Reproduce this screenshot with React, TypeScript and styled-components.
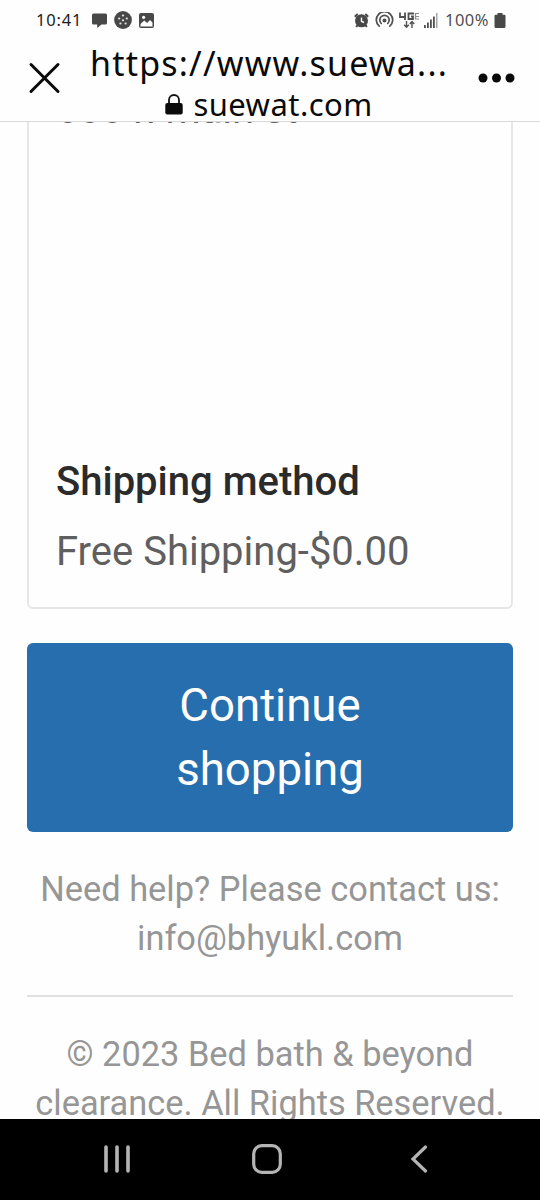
import React from "react";
import styled, { createGlobalStyle } from "styled-components";

const GlobalStyle = createGlobalStyle`
  * { box-sizing: border-box; }
  body { margin: 0; background: #fefefe; font-family: Roboto, sans-serif; }
`;

const Screen = styled.div`
  width: 540px;
  height: 1200px;
  display: flex;
  flex-direction: column;
  overflow: hidden;
  background: #fefefe;
`;

const StatusBar = styled.div`
  height: 40px;
  flex: none;
  display: flex;
  align-items: center;
  justify-content: space-between;
  padding: 0 34px 0 36px;
  font-family: "Noto Sans", sans-serif;
  color: #444;
`;

const StatusGroup = styled.div`
  display: flex;
  align-items: center;
`;

const StatusText = styled.span<{ $dark?: boolean; $left?: number }>`
  margin-left: ${(p) => p.$left ?? 0}px;
  font-size: 16.5px;
  line-height: 20px;
  letter-spacing: ${(p) => (p.$dark ? 0.8 : 0.5)}px;
  color: ${(p) => (p.$dark ? "#1c1c1c" : "#505050")};
`;

const Glyph = styled.svg<{ $left?: number }>`
  display: block;
  flex: none;
  margin-left: ${(p) => p.$left ?? 0}px;
`;

const BrowserBar = styled.header`
  height: 82px;
  flex: none;
  display: flex;
  align-items: flex-start;
  padding: 0 25px 0 28px;
  border-bottom: 1px solid #d9d9d9;
  color: #0a0a0a;
  font-family: "Noto Sans", sans-serif;
`;

const IconButton = styled.button`
  border: 0;
  padding: 0;
  margin-top: 21px;
  background: none;
  flex: none;
`;

const Address = styled.div`
  flex: 1;
  display: flex;
  flex-direction: column;
  align-items: center;
`;

const PageTitle = styled.div`
  height: 47px;
  line-height: 46px;
  font-size: 34px;
  letter-spacing: 1.2px;
  white-space: nowrap;
`;

const Domain = styled.div`
  height: 35px;
  display: flex;
  align-items: center;
  gap: 10px;
  font-size: 31px;
  line-height: 35px;
  letter-spacing: 0.45px;
`;

const Page = styled.main`
  flex: 1;
  min-height: 0;
  overflow: hidden;
  padding: 0 27px;
`;

const Card = styled.section`
  height: 547px;
  margin-top: -60px;
  padding: 22px 27px 0;
  border: 2px solid #e6e6e6;
  border-radius: 6px;
  font-size: 40px;
  line-height: 48px;
  color: #5f5f5f;
`;

const AddressLine = styled.p`
  margin: 0 0 324px;
`;

const CardHeading = styled.h3`
  margin: 0 0 22px;
  font-size: 40px;
  font-weight: 500;
  line-height: 48px;
  color: #2b2b2b;
`;

const ShippingValue = styled.p`
  margin: 0;
`;

const ContinueButton = styled.button`
  display: block;
  width: 100%;
  height: 189px;
  margin-top: 34px;
  padding: 0 120px;
  border: 0;
  border-radius: 6px;
  background: #276eae;
  color: #fff;
  font-family: Roboto, sans-serif;
  font-size: 45.6px;
  line-height: 64px;
`;

const FooterText = styled.p`
  margin: 33px -20px 0;
  text-align: center;
  font-size: 34.4px;
  line-height: 48.5px;
  color: #969696;
`;

const Divider = styled.hr`
  height: 2px;
  margin: 33px 0 0;
  border: 0;
  background: #e0e0e0;
`;

const NavBar = styled.nav`
  height: 81px;
  flex: none;
  display: flex;
  align-items: center;
  padding: 0 0 2px 103px;
  background: #000;
`;

export default function App() {
  return (
    <>
      <GlobalStyle />
      <Screen>
        <StatusBar>
          <StatusGroup>
            <StatusText $dark>10:41</StatusText>
            <Glyph $left={10} width="15" height="15" viewBox="0 0 15 15" fill="#484848">
              <path d="M1.5.5h12Q15 .5 15 2v8Q15 11.500 13.500 11.500H9.500L5.200 15V11.500H1.500Q0 11.500 0 10V2Q0 .5 1.500.5z" />
            </Glyph>
            <Glyph $left={7} width="18" height="18" viewBox="0 0 18 18">
              <circle cx="9" cy="9" r="8.900" fill="#484848" />
              <g fill="#e6e6e6">
                <circle cx="9" cy="4.500" r="1.100" /><circle cx="5.200" cy="7.500" r="1.100" />
                <circle cx="12.800" cy="7.500" r="1.100" /><circle cx="9" cy="9.300" r="1.100" />
                <circle cx="6.400" cy="12.500" r="1.100" /><circle cx="11.600" cy="12.500" r="1.100" />
              </g>
            </Glyph>
            <Glyph $left={7} width="15" height="15" viewBox="0 0 15 15">
              <rect width="15" height="15" rx="2" fill="#484848" />
              <path d="M1.500 11L5.200 7.500l3 2.500L11 7l2.500 2.500V13.500h-12z" fill="#fefefe" />
              <circle cx="4.600" cy="4.300" r="1.600" fill="#fefefe" />
            </Glyph>
          </StatusGroup>
          <StatusGroup>
            <Glyph width="15" height="15" viewBox="0 0 15 15">
              <path d="M.8 3.700L3.700 1M14.200 3.700L11.300 1M3.500 12l-1.300 2M11.500 12l1.300 2" stroke="#484848" strokeWidth="2" />
              <circle cx="7.500" cy="7.800" r="6.500" fill="#484848" />
              <path d="M7.500 4.500V8.300L10 9.500" fill="none" stroke="#fefefe" strokeWidth="1.400" />
            </Glyph>
            <Glyph $left={6} width="19" height="16" viewBox="0 0 19 16" fill="none" stroke="#505050" strokeWidth="1.700" strokeLinecap="round">
              <path d="M4.200 14.200A8.200 8.200 0 1 1 14.800 14.200" />
              <path d="M6.300 11.500A4.700 4.700 0 1 1 12.700 11.500" />
              <circle cx="9.500" cy="8.500" r="1.200" fill="#505050" />
            </Glyph>
            <Glyph $left={5} width="21" height="17" viewBox="0 0 21 17" fill="none" stroke="#505050" strokeWidth="1.800">
              <path d="M1 .5v4.500h6M6 .5V8M15 1.500H9.500V7H14V4.500H12" />
              <path d="M16.500 7.500V1.500H20M16.500 4.500H20M16.500 7H20" strokeWidth="1.200" opacity=".65" />
              <path d="M7.500 9v6M5.200 12.800l2.300 2.400 2.300-2.400M13 16v-6M10.700 12l2.300-2.400 2.300 2.400" strokeWidth="1.400" />
            </Glyph>
            <Glyph $left={4} width="14" height="15" viewBox="0 0 14 15" fill="#505050">
              <path d="M0 12h1.800v3H0zM3 9.500h1.800V15H3zM6 6.500h1.800V15H6zM9 3.500h1.800V15H9z" />
              <path d="M12 0h1.500v15H12z" opacity=".5" />
            </Glyph>
            <StatusText $left={7}>100%</StatusText>
            <Glyph $left={5} width="12" height="15" viewBox="0 0 12 15" fill="#484848">
              <path d="M3.500 0h5v1.700h2Q11.500 1.700 11.500 3v10.500Q11.500 15 10 15H2Q.5 15 .5 13.500V3Q.5 1.700 1.500 1.700h2z" />
            </Glyph>
          </StatusGroup>
        </StatusBar>
        <BrowserBar>
          <IconButton aria-label="Close">
            <Glyph width="33" height="33" viewBox="0 0 33 33" stroke="#0a0a0a" strokeWidth="3" strokeLinecap="round">
              <path d="M3 3.500L30 30.500M30 3.500L3 30.500" />
            </Glyph>
          </IconButton>
          <Address>
            <PageTitle>https://www.suewa...</PageTitle>
            <Domain>
              <Glyph width="18" height="24" viewBox="0 0 18 24">
                <path d="M4 11V7a5 5 0 0 1 10 0V11" fill="none" stroke="#111" strokeWidth="1.800" />
                <rect x=".3" y="10" width="17.400" height="11.500" rx="2" fill="#0a0a0a" />
              </Glyph>
              <span>suewat.com</span>
            </Domain>
          </Address>
          <IconButton aria-label="More options">
            <Glyph width="38" height="33" viewBox="0 0 38 33" fill="#0a0a0a">
              <circle cx="6" cy="17" r="4.500" /><circle cx="19.500" cy="17" r="4.500" /><circle cx="33" cy="17" r="4.500" />
            </Glyph>
          </IconButton>
        </BrowserBar>
        <Page>
          <Card>
            <AddressLine>600 n main st</AddressLine>
            <CardHeading>Shipping method</CardHeading>
            <ShippingValue>Free Shipping-$0.00</ShippingValue>
          </Card>
          <ContinueButton>Continue shopping</ContinueButton>
          <FooterText>Need help? Please contact us:<br />info@bhyukl.com</FooterText>
          <Divider />
          <FooterText>© 2023 Bed bath &amp; beyond<br />clearance. All Rights Reserved.</FooterText>
        </Page>
        <NavBar>
          <Glyph width="28" height="28" viewBox="0 0 28 28" stroke="#b4b4b4" strokeWidth="3.600" strokeLinecap="round">
            <path d="M3 2v24M14 2v24M25 2v24" />
          </Glyph>
          <Glyph $left={121} width="30" height="30" viewBox="0 0 30 30" fill="none" stroke="#b4b4b4" strokeWidth="3.200">
            <rect x="1.700" y="1.700" width="26.600" height="26.600" rx="8" />
          </Glyph>
          <Glyph $left={128} width="18" height="28" viewBox="0 0 18 28" fill="none" stroke="#b4b4b4" strokeWidth="3.200" strokeLinecap="round">
            <path d="M15.500 2L3 14l12.500 12" />
          </Glyph>
        </NavBar>
      </Screen>
    </>
  );
}
